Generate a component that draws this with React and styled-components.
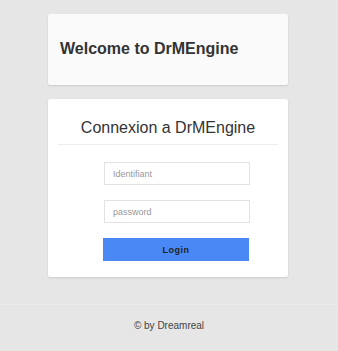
import React from 'react';
import styled, { createGlobalStyle } from 'styled-components';

const GlobalStyle = createGlobalStyle`
  html, body {
    margin: 0;
    padding: 0;
    background: #e6e6e6;
    font-family: "Liberation Sans", Arial, sans-serif;
  }
`;

const Page = styled.div`
  width: 338px;
  min-height: 351px;
  background: #e6e6e6;
  display: flex;
  flex-direction: column;
`;

const Main = styled.div`
  width: 240px;
  margin-left: 48px;
  padding-top: 14px;
  display: flex;
  flex-direction: column;
  gap: 14px;
`;

const Card = styled.div`
  background: ${p => (p.$tint ? '#fafafa' : '#ffffff')};
  border-radius: 2px;
  box-shadow: 0 1px 2px rgba(0, 0, 0, 0.12);
`;

const Header = styled(Card)`
  height: 71px;
  display: flex;
  align-items: center;
  padding: 0 0 2px 12px;
  box-sizing: border-box;
`;

const HeaderTitle = styled.h1`
  margin: 0;
  font-size: 16px;
  font-weight: bold;
  color: #333;
`;

const LoginCard = styled(Card)`
  height: 178px;
  padding: 0 10px;
  box-sizing: border-box;
  display: flex;
  flex-direction: column;
`;

const LoginTitle = styled.h2`
  margin: 0;
  padding: 20px 0 7px;
  line-height: 18px;
  text-align: center;
  font-size: 16px;
  font-weight: normal;
  color: #333;
  border-bottom: 1px solid #eee;
`;

const Form = styled.form`
  display: flex;
  flex-direction: column;
  align-items: flex-start;
  padding: 17px 0 0 46px;
  gap: 15px;
`;

const Input = styled.input`
  width: 146px;
  height: 23px;
  box-sizing: border-box;
  border: 1px solid #e2e2e2;
  padding: 0 8px;
  font-family: "Liberation Sans", Arial, sans-serif;
  font-size: 9px;
  color: #555;
  background: #fff;
  outline: none;
  &::placeholder { color: #999; }
`;

const Button = styled.button`
  width: 146px;
  height: 23px;
  margin-left: -1px;
  border: none;
  background: #4a89f5;
  color: #222;
  font-family: "Liberation Sans", Arial, sans-serif;
  font-size: 9px;
  font-weight: bold;
  letter-spacing: 0.5px;
`;

const Footer = styled.footer`
  margin-top: 27px;
  border-top: 1px solid #ebebeb;
  height: 40px;
  display: flex;
  align-items: center;
  justify-content: center;
  font-size: 10px;
  color: #444;
`;

export default function App() {
  return (
    <Page>
      <GlobalStyle />
      <Main>
        <Header $tint>
          <HeaderTitle>Welcome to DrMEngine</HeaderTitle>
        </Header>
        <LoginCard>
          <LoginTitle>Connexion a DrMEngine</LoginTitle>
          <Form onSubmit={e => e.preventDefault()}>
            <Input type="text" placeholder="Identifiant" />
            <Input type="password" placeholder="password" />
            <Button type="submit">Login</Button>
          </Form>
        </LoginCard>
      </Main>
      <Footer>© by Dreamreal</Footer>
    </Page>
  );
}
